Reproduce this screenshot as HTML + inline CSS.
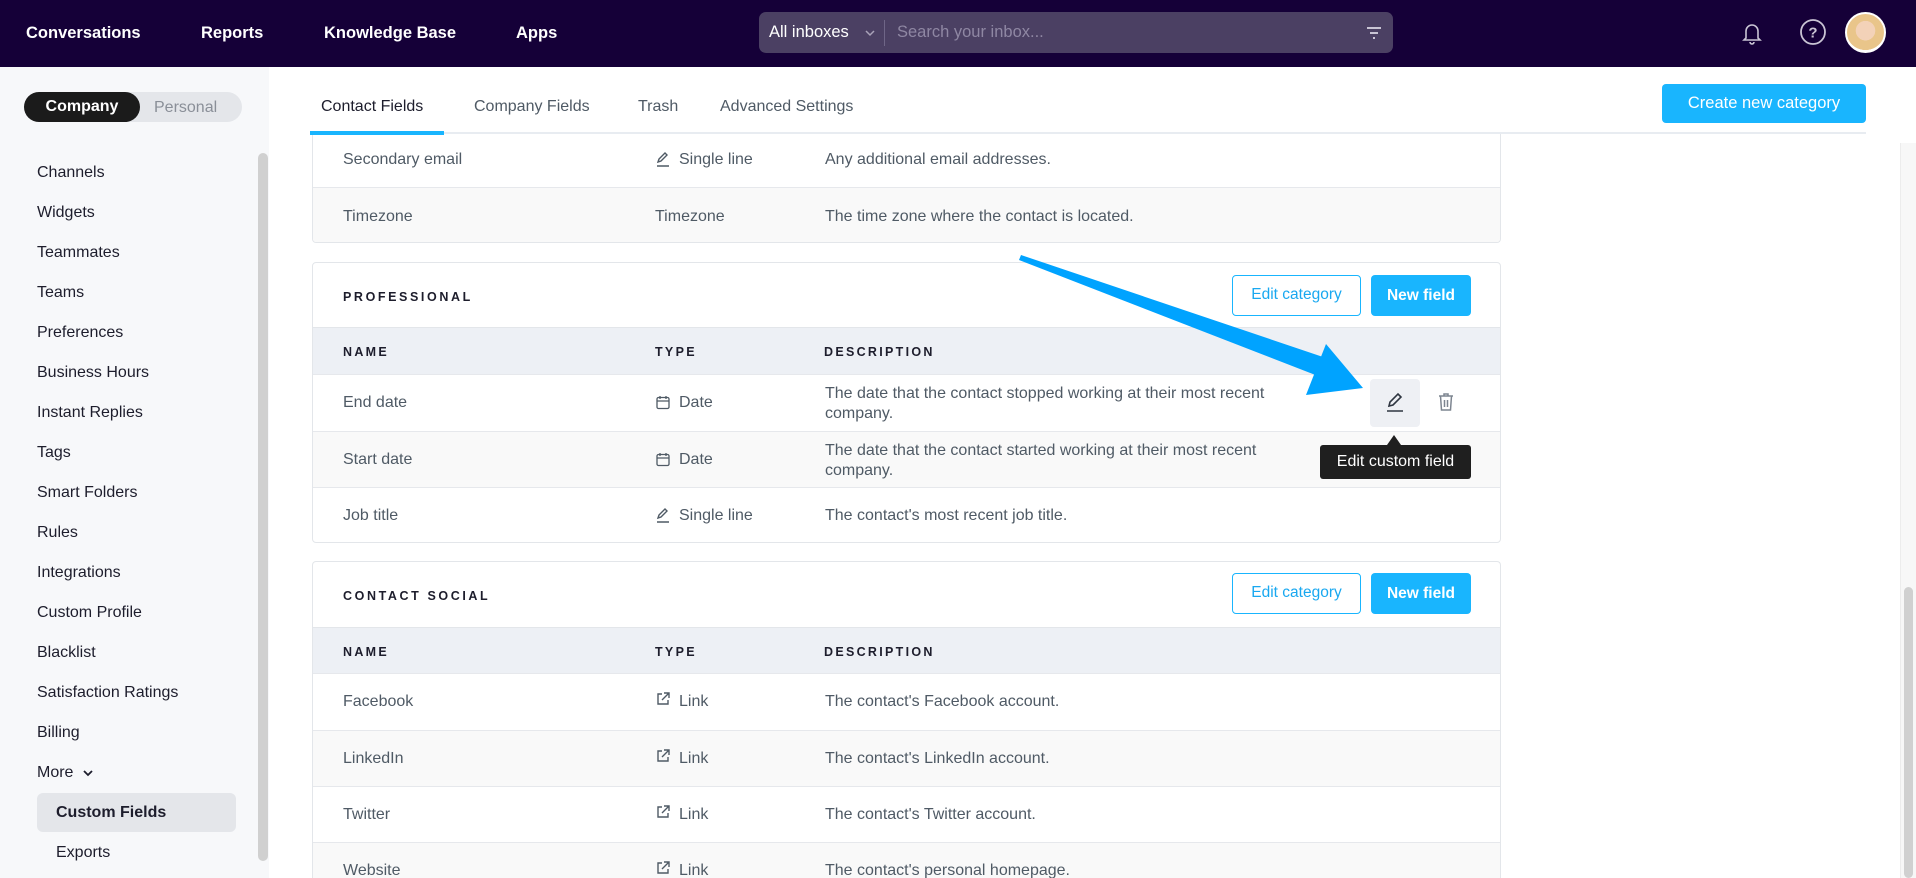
<!DOCTYPE html>
<html style="overflow:hidden;width:1916px;height:878px"><head><meta charset="utf-8"><style>
*{box-sizing:border-box;margin:0;padding:0}
body{width:1916px;height:878px;overflow:hidden;font-family:"Liberation Sans",sans-serif;background:#fff;position:relative;color:#4f5a65}
.top{position:absolute;left:0;top:0;width:1916px;height:67px;background:#150038}
.nav{position:absolute;top:24px;color:#fff;font-size:16.5px;font-weight:bold}
.search{position:absolute;left:759px;top:12px;width:634px;height:41px;background:#4b4063;border-radius:7px}
.side{position:absolute;left:0;top:67px;width:269px;height:811px;background:#f7f8fa}
.si{position:absolute;left:37px;font-size:16px;color:#1d1d2c}
.tab{position:absolute;top:98px;font-size:16px;color:#4f5a65}
.card{position:absolute;left:312px;width:1189px;border:1px solid #e3e6ea;border-radius:4px;background:#fff;overflow:hidden}
.row{position:absolute;left:0;width:100%;border-top:1px solid #e6e8ec;font-size:16px;color:#4f5a65}
.row span{position:absolute}
.hdr{position:absolute;left:0;width:100%;background:#edf0f5;border-top:1px solid #e3e6ea;font-size:12.5px;font-weight:bold;letter-spacing:2.3px;color:#1d1d2c}
.hdr span{position:absolute;top:17px}
.ct{position:absolute;left:30px;font-size:12.5px;font-weight:bold;letter-spacing:2.6px;color:#1d1d2c}
.bo{position:absolute;height:41px;border:1.5px solid #19b5fe;border-radius:4px;color:#19a8f0;font-size:15.5px;text-align:center;line-height:38px;background:#fff}
.bf{position:absolute;height:41px;background:#19b5fe;border-radius:4px;color:#fff;font-size:15.5px;font-weight:bold;text-align:center;line-height:41px}
svg.i{position:absolute}
</style></head><body>
<div class="top"></div>
<div class="nav" style="left:26px">Conversations</div>
<div class="nav" style="left:201px">Reports</div>
<div class="nav" style="left:324px">Knowledge Base</div>
<div class="nav" style="left:516px">Apps</div>
<div class="search">
<div style="position:absolute;left:10px;top:11px;color:#fff;font-size:16.5px">All inboxes</div>
<svg class="i" style="left:106px;top:17px" width="10" height="8" viewBox="0 0 10 8"><path d="M1 2l4 4 4-4" stroke="#a9a2b8" stroke-width="1.5" fill="none"/></svg>
<div style="position:absolute;left:125px;top:8px;width:1px;height:26px;background:#6f6687"></div>
<div style="position:absolute;left:138px;top:11px;color:#8f87a3;font-size:16.5px">Search your inbox...</div>
<svg class="i" style="left:606px;top:13px" width="18" height="16" viewBox="0 0 18 16"><path d="M2 3h14M5 8h8M8 13h2" stroke="#c9c4d4" stroke-width="2"/></svg>
</div>
<svg class="i" style="left:1740px;top:20px" width="24" height="26" viewBox="0 0 24 26"><path d="M6 18V11a6 6 0 0112 0v7l2 2H4z M10 22a2 2 0 004 0" stroke="#c9c4d4" stroke-width="1.6" fill="none"/></svg>
<svg class="i" style="left:1799px;top:18px" width="28" height="28" viewBox="0 0 28 28"><circle cx="14" cy="14" r="12" stroke="#c9c4d4" stroke-width="1.8" fill="none"/><text x="14" y="19.5" text-anchor="middle" font-size="15" font-weight="bold" fill="#c9c4d4" font-family="Liberation Sans">?</text></svg>
<div style="position:absolute;left:1845px;top:12px;width:41px;height:41px;border-radius:50%;background:radial-gradient(circle at 50% 45%,#f3d2b8 0 35%,#e9c58a 36% 70%,#fff 71%);border:2px solid #fff"></div>

<div class="side"></div>
<div style="position:absolute;left:24px;top:92px;width:218px;height:30px;border-radius:15px;background:#e4e6ea"></div>
<div style="position:absolute;left:24px;top:92px;width:116px;height:30px;border-radius:15px;background:#1b1b1b;color:#fff;font-weight:bold;font-size:16px;text-align:center;line-height:30px">Company</div>
<div style="position:absolute;left:154px;top:99px;font-size:16px;color:#8a8f98">Personal</div>
<div style="position:absolute;left:258px;top:153px;width:10px;height:708px;border-radius:5px;background:#d0d0d0"></div>
<div class="si" style="top:164px">Channels</div>
<div class="si" style="top:204px">Widgets</div>
<div class="si" style="top:244px">Teammates</div>
<div class="si" style="top:284px">Teams</div>
<div class="si" style="top:324px">Preferences</div>
<div class="si" style="top:364px">Business Hours</div>
<div class="si" style="top:404px">Instant Replies</div>
<div class="si" style="top:444px">Tags</div>
<div class="si" style="top:484px">Smart Folders</div>
<div class="si" style="top:524px">Rules</div>
<div class="si" style="top:564px">Integrations</div>
<div class="si" style="top:604px">Custom Profile</div>
<div class="si" style="top:644px">Blacklist</div>
<div class="si" style="top:684px">Satisfaction Ratings</div>
<div class="si" style="top:724px">Billing</div>
<div class="si" style="top:764px">More <svg width="12" height="8" viewBox="0 0 12 8" style="margin-left:4px"><path d="M2 2l4 4 4-4" stroke="#1d1d2c" stroke-width="1.8" fill="none"/></svg></div>
<div style="position:absolute;left:37px;top:793px;width:199px;height:39px;border-radius:6px;background:#e4e6ea"></div>
<div class="si" style="left:56px;top:804px;font-weight:bold">Custom Fields</div>
<div class="si" style="left:56px;top:844px">Exports</div>

<div class="card" style="top:120px;height:123px;border-top:none">
<div class="row" style="top:0;height:67px;border-top:none"><span style="left:30px;top:31px">Secondary email</span><svg class="i" style="left:342px;top:30px" width="16" height="18" viewBox="0 0 16 18"><path d="M3 12l1-3 6-6 2 2-6 6z M2 16h12" stroke="#4f5a65" stroke-width="1.4" fill="none"/></svg><span style="left:366px;top:31px">Single line</span><span style="left:512px;top:31px">Any additional email addresses.</span></div>
<div class="row" style="top:67px;height:56px;background:#f9f9f9"><span style="left:30px;top:20px">Timezone</span><span style="left:342px;top:20px">Timezone</span><span style="left:512px;top:20px">The time zone where the contact is located.</span></div>
</div>

<div class="card" style="top:262px;height:281px">
<div class="ct" style="top:27px">PROFESSIONAL</div>
<div class="bo" style="left:919px;top:12px;width:129px">Edit category</div>
<div class="bf" style="left:1058px;top:12px;width:100px">New field</div>
<div class="hdr" style="top:64px;height:48px"><span style="left:30px">NAME</span><span style="left:342px">TYPE</span><span style="left:511px">DESCRIPTION</span></div>
<div class="row" style="top:111px;height:57px"><span style="left:30px;top:19px">End date</span><svg class="i" style="left:343px;top:20px" width="14" height="15" viewBox="0 0 14 15"><rect x="1" y="2.5" width="12" height="11" rx="1.5" stroke="#4f5a65" stroke-width="1.3" fill="none"/><path d="M1 6h12M4 1v3M10 1v3" stroke="#4f5a65" stroke-width="1.3"/></svg><span style="left:366px;top:19px">Date</span><span style="left:512px;top:9px;line-height:20px;width:440px">The date that the contact stopped working at their most recent company.</span>
<div style="position:absolute;left:1057px;top:4px;width:50px;height:48px;border-radius:4px;background:#eef0f4"></div>
<svg class="i" style="left:1071px;top:16px" width="22" height="22" viewBox="0 0 22 22"><path d="M5 15l1-4 8-8 3 3-8 8z M3 20h16" stroke="#2e3540" stroke-width="1.6" fill="none"/></svg>
<svg class="i" style="left:1124px;top:17px" width="18" height="20" viewBox="0 0 18 20"><path d="M2 4h14M7 4V2h4v2M3.5 4l1 14h9l1-14M7.5 8v7M10.5 8v7" stroke="#7d8590" stroke-width="1.5" fill="none"/></svg>
</div>
<div class="row" style="top:168px;height:56px;background:#f9f9f9"><span style="left:30px;top:19px">Start date</span><svg class="i" style="left:343px;top:20px" width="14" height="15" viewBox="0 0 14 15"><rect x="1" y="2.5" width="12" height="11" rx="1.5" stroke="#4f5a65" stroke-width="1.3" fill="none"/><path d="M1 6h12M4 1v3M10 1v3" stroke="#4f5a65" stroke-width="1.3"/></svg><span style="left:366px;top:19px">Date</span><span style="left:512px;top:9px;line-height:20px;width:500px">The date that the contact started working at their most recent company.</span></div>
<div class="row" style="top:224px;height:57px"><span style="left:30px;top:19px">Job title</span><svg class="i" style="left:342px;top:18px" width="16" height="18" viewBox="0 0 16 18"><path d="M3 12l1-3 6-6 2 2-6 6z M2 16h12" stroke="#4f5a65" stroke-width="1.4" fill="none"/></svg><span style="left:366px;top:19px">Single line</span><span style="left:512px;top:19px">The contact's most recent job title.</span></div>
</div>

<div class="card" style="top:561px;height:317px;border-bottom:none;border-radius:4px 4px 0 0">
<div class="ct" style="top:27px">CONTACT SOCIAL</div>
<div class="bo" style="left:919px;top:11px;width:129px">Edit category</div>
<div class="bf" style="left:1058px;top:11px;width:100px">New field</div>
<div class="hdr" style="top:65px;height:47px"><span style="left:30px">NAME</span><span style="left:342px">TYPE</span><span style="left:511px">DESCRIPTION</span></div>
<div class="row" style="top:111px;height:57px"><span style="left:30px;top:19px">Facebook</span><svg class="i" style="left:343px;top:18px" width="14" height="14" viewBox="0 0 14 14"><path d="M6 2H2v10h10V8M8 1h5v5M13 1L6 8" stroke="#4f5a65" stroke-width="1.4" fill="none"/></svg><span style="left:366px;top:19px">Link</span><span style="left:512px;top:19px">The contact's Facebook account.</span></div>
<div class="row" style="top:168px;height:56px;background:#f9f9f9"><span style="left:30px;top:19px">LinkedIn</span><svg class="i" style="left:343px;top:18px" width="14" height="14" viewBox="0 0 14 14"><path d="M6 2H2v10h10V8M8 1h5v5M13 1L6 8" stroke="#4f5a65" stroke-width="1.4" fill="none"/></svg><span style="left:366px;top:19px">Link</span><span style="left:512px;top:19px">The contact's LinkedIn account.</span></div>
<div class="row" style="top:224px;height:56px"><span style="left:30px;top:19px">Twitter</span><svg class="i" style="left:343px;top:18px" width="14" height="14" viewBox="0 0 14 14"><path d="M6 2H2v10h10V8M8 1h5v5M13 1L6 8" stroke="#4f5a65" stroke-width="1.4" fill="none"/></svg><span style="left:366px;top:19px">Link</span><span style="left:512px;top:19px">The contact's Twitter account.</span></div>
<div class="row" style="top:280px;height:56px;background:#f9f9f9"><span style="left:30px;top:19px">Website</span><svg class="i" style="left:343px;top:18px" width="14" height="14" viewBox="0 0 14 14"><path d="M6 2H2v10h10V8M8 1h5v5M13 1L6 8" stroke="#4f5a65" stroke-width="1.4" fill="none"/></svg><span style="left:366px;top:19px">Link</span><span style="left:512px;top:19px">The contact's personal homepage.</span></div>
</div>

<div style="position:absolute;left:269px;top:67px;width:1623px;height:66px;background:#fff"></div>
<div class="tab" style="left:321px;color:#1d1d2c">Contact Fields</div>
<div class="tab" style="left:474px">Company Fields</div>
<div class="tab" style="left:638px">Trash</div>
<div class="tab" style="left:720px">Advanced Settings</div>
<div style="position:absolute;left:310px;top:132px;width:1556px;height:2px;background:#e8ecf1"></div>
<div style="position:absolute;left:310px;top:131px;width:134px;height:4px;background:#19b5fe"></div>
<div class="bf" style="left:1662px;top:84px;width:204px;height:39px;line-height:39px;font-weight:normal;font-size:16.5px">Create new category</div>

<div style="position:absolute;left:1900px;top:143px;width:16px;height:735px;background:#f7f7f7;border-left:1px solid #ececec"></div>
<div style="position:absolute;left:1904px;top:587px;width:9px;height:291px;border-radius:5px;background:#d0d0d0"></div>

<svg class="i" style="left:0;top:0" width="1916" height="878" viewBox="0 0 1916 878"><polygon points="1021,255 1326,358 1318,376 1019,260" fill="#00a3ff"/><polygon points="1326,344 1363,388 1306,395" fill="#00a3ff"/></svg>
<div style="position:absolute;left:1320px;top:445px;width:151px;height:34px;background:#1f1f1f;border-radius:3px;color:#fff;font-size:16px;text-align:center;line-height:34px">Edit custom field</div>
<div style="position:absolute;left:1387px;top:435px;width:0;height:0;border-left:7px solid transparent;border-right:7px solid transparent;border-bottom:10px solid #1f1f1f"></div>
</body></html>
